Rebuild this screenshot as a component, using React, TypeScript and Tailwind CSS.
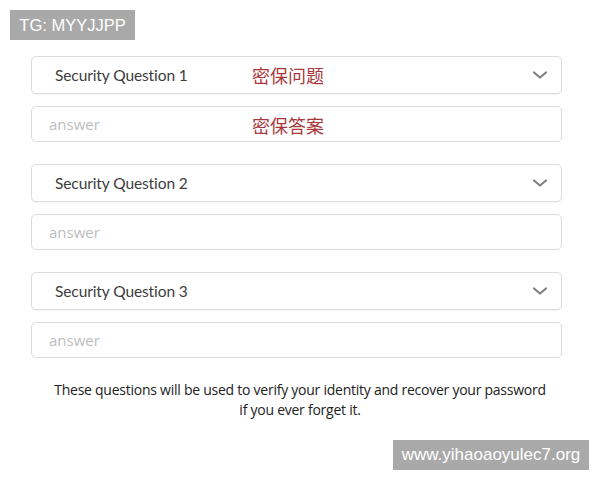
import React from "react";

function Chevron() {
  return (
    <svg width="16" height="10" viewBox="0 0 16 10" fill="none">
      <path d="M2 2.5 L8 7.5 L14 2.5" stroke="#808080" strokeWidth="2.2" strokeLinecap="round" strokeLinejoin="round" />
    </svg>
  );
}

function Group({ n, cnQ, cnA }: { n: number; cnQ?: string; cnA?: string }) {
  return (
    <div className="flex flex-col gap-[12px]">
      <div className="relative flex h-[38px] items-center rounded-[5px] border border-[#dcdcdc] bg-white pl-[23px] pr-[13px] shadow-[0_1px_1px_rgba(0,0,0,0.04)]">
        <span className="pt-[1px] text-[15.5px] tracking-[-0.1px] text-[#3d3d3d]" style={{ fontFamily: 'Lato, "Open Sans", sans-serif' }}>Security Question {n}</span>
        {cnQ && (
          <span className="absolute left-[220px] top-[5px] text-[18px] text-[#a8383c]" style={{ fontFamily: '"Noto Sans CJK SC", sans-serif' }}>
            {cnQ}
          </span>
        )}
        <span className="ml-auto flex items-center">
          <Chevron />
        </span>
      </div>
      <div className="relative flex h-[36px] items-center rounded-[5px] border border-[#dcdcdc] bg-white pl-[17px]">
        <span className="text-[15px] text-[#bdbdbd]">answer</span>
        {cnA && (
          <span className="absolute left-[220px] top-[5px] text-[18px] text-[#a8383c]" style={{ fontFamily: '"Noto Sans CJK SC", sans-serif' }}>
            {cnA}
          </span>
        )}
      </div>
    </div>
  );
}

export default function App() {
  return (
    <div
      className="relative h-[480px] w-[600px] overflow-hidden bg-white"
      style={{ fontFamily: '"Open Sans", "Noto Sans", sans-serif' }}
    >
      <div className="absolute left-[10px] top-[10px] flex h-[30px] w-[125px] items-center justify-center bg-[#a9a9a9] text-[16.5px] text-white" style={{ fontFamily: '"Liberation Sans", Arial, sans-serif' }}>
        TG: MYYJJPP
      </div>
      <div className="ml-[31px] w-[531px] pt-[56px] flex flex-col gap-[22px]">
        <Group n={1} cnQ="密保问题" cnA="密保答案" />
        <Group n={2} />
        <Group n={3} />
      </div>
      <div className="mt-[22px] text-center text-[14px] leading-[20px] tracking-[-0.25px] text-[#222]">
        <div>These questions will be used to verify your identity and recover your password</div>
        <div>if you ever forget it.</div>
      </div>
      <div className="absolute left-[393px] top-[440px] flex h-[30px] w-[196px] items-center justify-center bg-[#a9a9a9] text-[17px] text-white" style={{ fontFamily: '"Liberation Sans", Arial, sans-serif' }}>
        www.yihaoaoyulec7.org
      </div>
    </div>
  );
}
